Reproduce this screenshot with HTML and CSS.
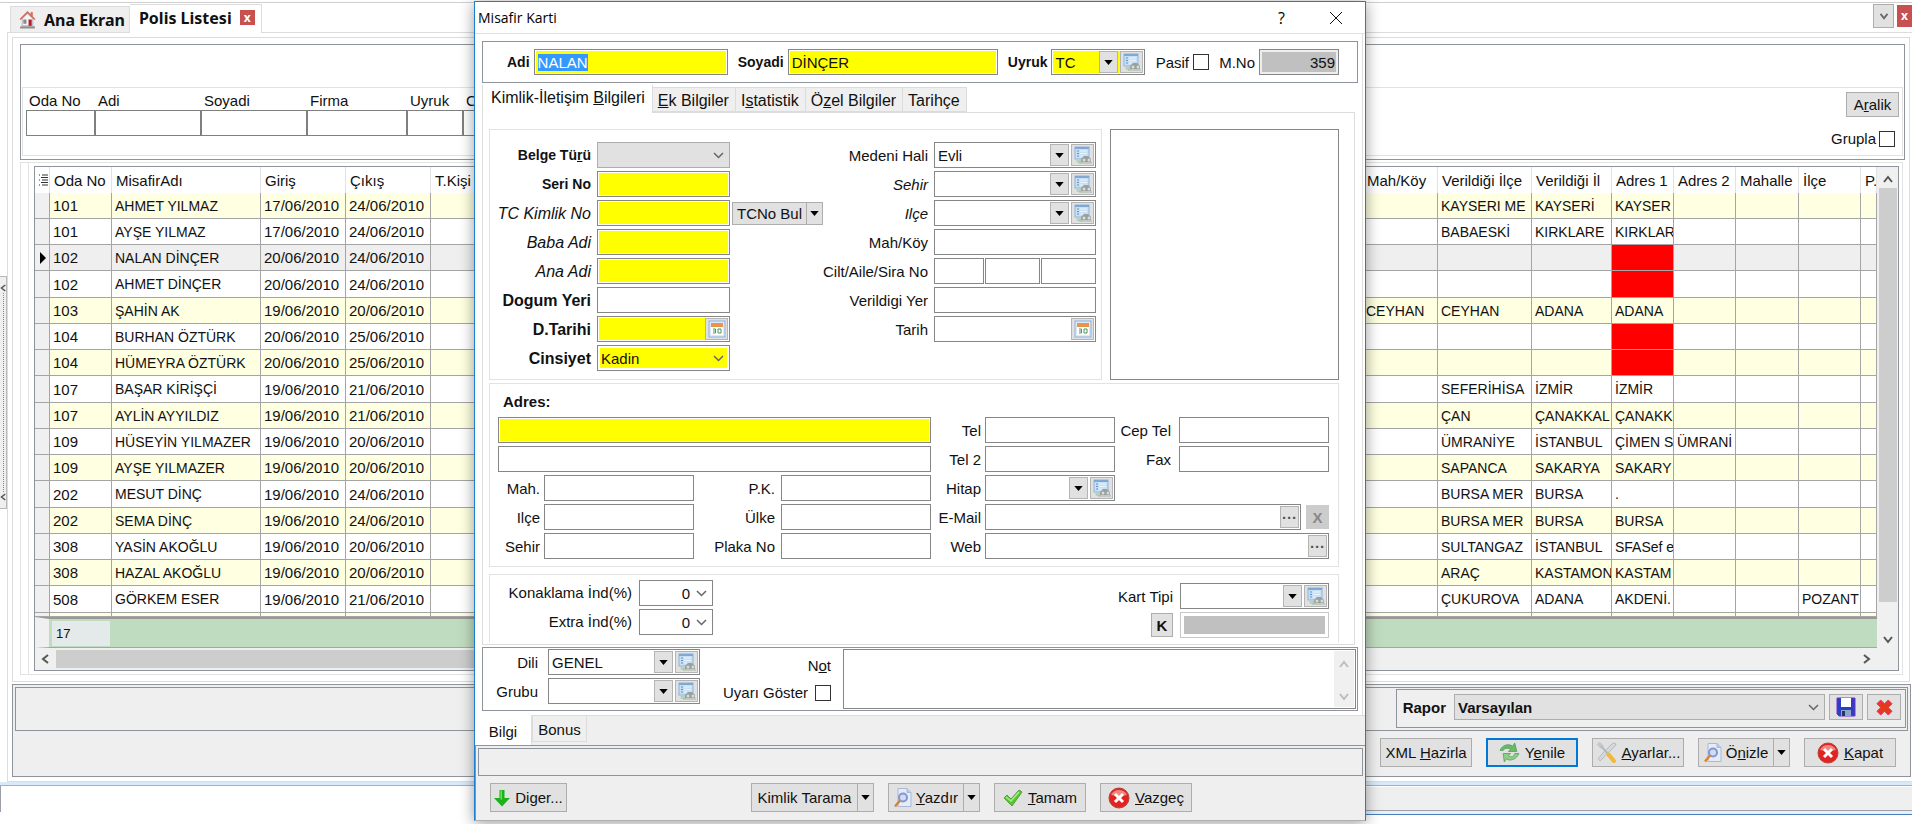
FILE: index.html
```html
<!DOCTYPE html>
<html lang="tr">
<head>
    <meta charset="UTF-8">
    <meta name="viewport" content="width=device-width, initial-scale=1.0">
    <title>Misafir Karti</title>
    <link rel="stylesheet" href="styles.css">
</head>
<body>
    <!-- icon set -->
    <svg class="sprite" aria-hidden="true">
        <symbol id="i-home" viewBox="0 0 16 18">
            <path d="M3 8v7h10V8L8 3z" fill="#f4f4f4" stroke="#b8b8b8"/>
            <path d="M1 9l7-7 7 7" fill="none" stroke="#d9675a" stroke-width="1.500"/>
            <path d="M12 2v4" stroke="#d9675a" stroke-width="2"/>
            <rect x="4" y="9" width="3" height="4" fill="#8a8a8a"/>
            <rect x="9" y="9" width="3" height="6" fill="#b3202c"/>
            <path d="M1 16.500h14" stroke="#8d8d8d" stroke-width="2"/>
        </symbol>
        <symbol id="i-lookup" viewBox="0 0 20 20">
            <rect x="2" y="2" width="14" height="12" fill="#c9dff3" stroke="#8fb5dc"/>
            <path d="M2 3h14" stroke="#7ea9d6" stroke-width="2"/>
            <path d="M4 6h2M4 8.500h2M4 11h2" stroke="#5c90c8"/>
            <path d="M7 6h7M7 8.500h7M7 11h3" stroke="#e8f3fd"/>
            <path d="M3 14l6 1v3H4z" fill="#b9cfc0"/>
            <path d="M8 17v-3l3-3h4l3 3v3z" fill="#9aa09d"/>
            <circle cx="11" cy="15" r="1.500" fill="#d7dbd9"/>
            <circle cx="16" cy="15" r="1.500" fill="#d7dbd9"/>
            <path d="M6 18h13" stroke="#9fb79f"/>
        </symbol>
        <symbol id="i-calendar" viewBox="0 0 18 18">
            <rect x="1" y="1" width="16" height="16" fill="#dce9f8" stroke="#8fb0dc"/>
            <rect x="3" y="3" width="12" height="12" fill="#fff"/>
            <rect x="3" y="3" width="12" height="4" fill="#e8944a"/>
            <path d="M5 9h2.500M5 11h2M5 13h2.500M7.500 9v4M10 9h3v4h-3z" fill="none" stroke="#4a9a5a"/>
        </symbol>
        <symbol id="i-down" viewBox="0 0 16 18">
            <path d="M5.500 1h5v8H16l-8 8.500L0 9h5.500z" fill="#19b219"/>
            <path d="M6.500 1.500h1.500v9H6.500z" fill="#6fe05a"/>
        </symbol>
        <symbol id="i-preview" viewBox="0 0 18 20">
            <path d="M4 1h9l4 4v14H4z" fill="#e4ecfa" stroke="#a9b9d6"/>
            <path d="M13 1v4h4" fill="#b9cbe8" stroke="#a9b9d6"/>
            <circle cx="9" cy="10" r="4" fill="#cfdcf3" stroke="#8496cc" stroke-width="2"/>
            <path d="M6 13l-5 6" stroke="#d98236" stroke-width="2.500"/>
        </symbol>
        <symbol id="i-check" viewBox="0 0 20 18">
            <path d="M1 9l3-3 4 4 8-9 3 2L9 17z" fill="#55c82f" stroke="#5a9a4a"/>
            <path d="M3 8l5 4 8-9" fill="none" stroke="#a6ee85" stroke-width="1.500"/>
        </symbol>
        <symbol id="i-cancel" viewBox="0 0 22 22">
            <circle cx="11" cy="11" r="10" fill="#e2231f" stroke="#b9403e"/>
            <path d="M3 8a9 9 0 0 1 16 0 20 12 0 0 1-16 0z" fill="#f28781"/>
            <path d="M7 7l8 8M15 7l-8 8" stroke="#fff" stroke-width="3"/>
        </symbol>
        <symbol id="i-refresh" viewBox="0 0 20 20">
            <path d="M1 8c2-5 8-7 12-4l2-3 2 8H9l2-2C8 5 5 6 4 8z" fill="#6cb86a" stroke="#4d9a50" stroke-width=".7"/>
            <path d="M19 11c-2 5-8 8-12 5l-2 3-1-8h7l-2 2c3 2 5 1 6-2z" fill="#8ccf86" stroke="#4d9a50" stroke-width=".7"/>
        </symbol>
        <symbol id="i-tools" viewBox="0 0 20 20">
            <path d="M17 1l-2 1-8 8-5 6 2 2 6-6 8-8 1-2z" fill="#d5d8dc" stroke="#a8acb2" stroke-width=".7"/>
            <path d="M2 1l4 4" stroke="#c4c8cd" stroke-width="4"/>
            <path d="M5 4l6 7" stroke="#b5b9bf" stroke-width="2"/>
            <path d="M12 12l5 6" stroke="#f0b93a" stroke-width="4" stroke-linecap="round"/>
        </symbol>
        <symbol id="i-save" viewBox="0 0 20 20">
            <path d="M1 1h18v18H3l-2-2z" fill="#2b3fc4" stroke="#7a2fc0"/>
            <rect x="5" y="1" width="10" height="9" fill="#fff"/>
            <rect x="5" y="13" width="10" height="6" fill="#8aa7c8"/>
            <rect x="6" y="14" width="3" height="5" fill="#26346e"/>
        </symbol>
        <symbol id="i-delete" viewBox="0 0 18 18">
            <path d="M5 1l4 4 4-4 4 4-4 4 4 4-4 4-4-4-4 4-4-4 4-4-4-4z" fill="#e33a1d" stroke="#ee2a6a" stroke-linejoin="round"/>
        </symbol>
        <symbol id="i-rows" viewBox="0 0 9 12">
            <path d="M0 1h1M3 1h6M2 3.500h7M0 6h1M3 6h6M2 8.500h7M0 11h1M3 11h6" stroke="#333"/>
        </symbol>
        <symbol id="i-tri" viewBox="0 0 10 6"><path d="M0 0h10L5 6z" fill="#000"/></symbol>
        <symbol id="i-left" viewBox="0 0 8 10"><path d="M7 1L2 5l5 4" fill="none" stroke="#555" stroke-width="2"/></symbol>
        <symbol id="i-right" viewBox="0 0 8 10"><path d="M1 1l5 4-5 4" fill="none" stroke="#555" stroke-width="2"/></symbol>
        <symbol id="i-up" viewBox="0 0 10 8"><path d="M1 7l4-5 4 5" fill="none" stroke="currentColor" stroke-width="2"/></symbol>
        <symbol id="i-dn" viewBox="0 0 10 8"><path d="M1 1l4 5 4-5" fill="none" stroke="currentColor" stroke-width="2"/></symbol>
        <symbol id="i-x" viewBox="0 0 12 12"><path d="M0 0l12 12M12 0L0 12" stroke="#111"/></symbol>
    </svg>

    <div class="app">
        <div class="workspace">
            <div class="gutter">
                <div class="splitter">
                    <svg width="6" height="10"><use href="#i-left"/></svg>
                    <span class="dots"></span>
                    <svg width="6" height="10"><use href="#i-left"/></svg>
                </div>
            </div>
            <main class="main">
                <div class="main-tabs">
                    <a class="main-tab" href="#"><svg width="17" height="19"><use href="#i-home"/></svg>Ana Ekran</a>
                    <a class="main-tab active" href="#">Polis Listesi<span class="tab-close">x</span></a>
                    <div class="win-buttons">
                        <button class="drop" aria-label="Liste"><svg width="10" height="7"><use href="#i-dn"/></svg></button>
                        <button class="close" aria-label="Kapat">x</button>
                    </div>
                </div>
                <div class="page">
                    <div class="page-inner">
                        <div class="filter">
                            <div class="filter-box">
                                <div class="filter-fields">
                                    <label class="ff w-oda">Oda No<input type="text"></label>
                                    <label class="ff w-adi">Adi<input type="text"></label>
                                    <label class="ff w-adi">Soyadi<input type="text"></label>
                                    <label class="ff w-firma">Firma<input type="text"></label>
                                    <label class="ff w-uyruk">Uyruk<input type="text"></label>
                                    <label class="ff w-uyruk">Cinsiyet<input type="text"></label>
                                </div>
                                <div class="filter-side">
                                    <button class="btn small"><span>A<u>r</u>alik</span></button>
                                    <label class="check">Grupla<input type="checkbox"></label>
                                </div>
                            </div>
                        </div>
                        <div class="grid-panel">
                            <div class="grid-panel-inner">
                                <div class="grid">
                                    <div class="grid-left">
                                        <table class="guests">
                                            <colgroup>
                                                <col class="c-ind"><col class="c-oda"><col class="c-name"><col class="c-date"><col class="c-date"><col class="c-kisi"><col><col class="c-mah"><col class="c-vilce"><col class="c-vil"><col class="c-adr"><col class="c-adr"><col class="c-mhl"><col class="c-adr"><col class="c-pk">
                                            </colgroup>
                                            <thead>
                                                <tr><th><svg width="9" height="12"><use href="#i-rows"/></svg></th><th>Oda No</th><th>MisafirAdı</th><th>Giriş</th><th>Çıkış</th><th>T.Kişi</th><th></th><th>Mah/Köy</th><th>Verildiği İlçe</th><th>Verildiği İl</th><th>Adres 1</th><th>Adres 2</th><th>Mahalle</th><th>İlçe</th><th>P.</th></tr>
                                            </thead>
                                            <tbody>
                                                <tr><td></td><td class="n">101</td><td>AHMET YILMAZ</td><td class="n">17/06/2010</td><td class="n">24/06/2010</td><td></td><td></td><td></td><td>KAYSERI ME</td><td>KAYSERİ</td><td>KAYSER</td><td></td><td></td><td></td><td></td></tr>
                                                <tr><td></td><td class="n">101</td><td>AYŞE YILMAZ</td><td class="n">17/06/2010</td><td class="n">24/06/2010</td><td></td><td></td><td></td><td>BABAESKİ</td><td>KIRKLARE</td><td>KIRKLAR</td><td></td><td></td><td></td><td></td></tr>
                                                <tr class="current"><td><i class="marker"></i></td><td class="n">102</td><td>NALAN DİNÇER</td><td class="n">20/06/2010</td><td class="n">24/06/2010</td><td></td><td></td><td></td><td></td><td></td><td class="missing"></td><td></td><td></td><td></td><td></td></tr>
                                                <tr><td></td><td class="n">102</td><td>AHMET DİNÇER</td><td class="n">20/06/2010</td><td class="n">24/06/2010</td><td></td><td></td><td></td><td></td><td></td><td class="missing"></td><td></td><td></td><td></td><td></td></tr>
                                                <tr><td></td><td class="n">103</td><td>ŞAHİN AK</td><td class="n">19/06/2010</td><td class="n">20/06/2010</td><td></td><td></td><td>CEYHAN</td><td>CEYHAN</td><td>ADANA</td><td>ADANA</td><td></td><td></td><td></td><td></td></tr>
                                                <tr><td></td><td class="n">104</td><td>BURHAN ÖZTÜRK</td><td class="n">20/06/2010</td><td class="n">25/06/2010</td><td></td><td></td><td></td><td></td><td></td><td class="missing"></td><td></td><td></td><td></td><td></td></tr>
                                                <tr><td></td><td class="n">104</td><td>HÜMEYRA ÖZTÜRK</td><td class="n">20/06/2010</td><td class="n">25/06/2010</td><td></td><td></td><td></td><td></td><td></td><td class="missing"></td><td></td><td></td><td></td><td></td></tr>
                                                <tr><td></td><td class="n">107</td><td>BAŞAR KİRİŞÇİ</td><td class="n">19/06/2010</td><td class="n">21/06/2010</td><td></td><td></td><td></td><td>SEFERİHİSA</td><td>İZMİR</td><td>İZMİR</td><td></td><td></td><td></td><td></td></tr>
                                                <tr><td></td><td class="n">107</td><td>AYLİN AYYILDIZ</td><td class="n">19/06/2010</td><td class="n">21/06/2010</td><td></td><td></td><td></td><td>ÇAN</td><td>ÇANAKKAL</td><td>ÇANAKK</td><td></td><td></td><td></td><td></td></tr>
                                                <tr><td></td><td class="n">109</td><td>HÜSEYİN YILMAZER</td><td class="n">19/06/2010</td><td class="n">20/06/2010</td><td></td><td></td><td></td><td>ÜMRANİYE</td><td>İSTANBUL</td><td>ÇİMEN S</td><td>ÜMRANİ</td><td></td><td></td><td></td></tr>
                                                <tr><td></td><td class="n">109</td><td>AYŞE YILMAZER</td><td class="n">19/06/2010</td><td class="n">20/06/2010</td><td></td><td></td><td></td><td>SAPANCA</td><td>SAKARYA</td><td>SAKARY</td><td></td><td></td><td></td><td></td></tr>
                                                <tr><td></td><td class="n">202</td><td>MESUT DİNÇ</td><td class="n">19/06/2010</td><td class="n">24/06/2010</td><td></td><td></td><td></td><td>BURSA MER</td><td>BURSA</td><td>.</td><td></td><td></td><td></td><td></td></tr>
                                                <tr><td></td><td class="n">202</td><td>SEMA DİNÇ</td><td class="n">19/06/2010</td><td class="n">24/06/2010</td><td></td><td></td><td></td><td>BURSA MER</td><td>BURSA</td><td>BURSA</td><td></td><td></td><td></td><td></td></tr>
                                                <tr><td></td><td class="n">308</td><td>YASİN AKOĞLU</td><td class="n">19/06/2010</td><td class="n">20/06/2010</td><td></td><td></td><td></td><td>SULTANGAZ</td><td>İSTANBUL</td><td>SFASef e</td><td></td><td></td><td></td><td></td></tr>
                                                <tr><td></td><td class="n">308</td><td>HAZAL AKOĞLU</td><td class="n">19/06/2010</td><td class="n">20/06/2010</td><td></td><td></td><td></td><td>ARAÇ</td><td>KASTAMON</td><td>KASTAM</td><td></td><td></td><td></td><td></td></tr>
                                                <tr><td></td><td class="n">508</td><td>GÖRKEM ESER</td><td class="n">19/06/2010</td><td class="n">21/06/2010</td><td></td><td></td><td></td><td>ÇUKUROVA</td><td>ADANA</td><td>AKDENİ.</td><td></td><td></td><td>POZANT</td><td></td></tr>
                                                <tr class="cut"><td></td><td></td><td></td><td></td><td></td><td></td><td></td><td></td><td></td><td></td><td></td><td></td><td></td><td></td><td></td></tr>
                                            </tbody>
                                        </table>
                                        <div class="totals"><span class="count">17</span></div>
                                        <div class="hscroll">
                                            <svg width="8" height="10"><use href="#i-left"/></svg>
                                            <span class="hthumb"></span>
                                            <svg width="8" height="10"><use href="#i-right"/></svg>
                                        </div>
                                    </div>
                                    <div class="vscroll">
                                        <svg width="10" height="8"><use href="#i-up"/></svg>
                                        <span class="vthumb"></span>
                                        <svg width="10" height="8"><use href="#i-dn"/></svg>
                                    </div>
                                </div>
                            </div>
                        </div>
                    </div>
                    <div class="actions">
                        <div class="report-row">
                            <div class="report">
                                <label for="rapor">Rapor</label>
                                <select id="rapor" class="select grey"><option>Varsayılan</option></select>
                                <button class="btn icon" aria-label="Kaydet"><svg width="20" height="20"><use href="#i-save"/></svg></button>
                                <button class="btn icon" aria-label="Sil"><svg width="17" height="17"><use href="#i-delete"/></svg></button>
                            </div>
                        </div>
                        <div class="action-buttons">
                            <button class="btn wide"><span>XML <u>H</u>azirla</span></button>
                            <button class="btn wide primary"><svg width="21" height="21"><use href="#i-refresh"/></svg><span>Y<u>e</u>nile</span></button>
                            <button class="btn wide"><svg width="21" height="21"><use href="#i-tools"/></svg><span><u>A</u>yarlar...</span></button>
                            <div class="split wide"><button class="btn"><svg width="18" height="21"><use href="#i-preview"/></svg><span>Ö<u>n</u>izle</span></button><button class="btn arrow" aria-label="Önizle seçenekleri"><svg width="9" height="5"><use href="#i-tri"/></svg></button></div>
                            <button class="btn wide"><svg width="22" height="22"><use href="#i-cancel"/></svg><span><u>K</u>apat</span></button>
                        </div>
                    </div>
                </div>
            </main>
        </div>
        <div class="window-edge"></div>
        <div class="status"><span class="status-left"></span><span class="status-right"></span></div>
    </div>

    <section class="dialog" role="dialog" aria-label="Misafir Karti">
        <header class="title-bar">
            <span class="title">Misafir Karti</span>
            <button class="help" aria-label="Yardım">?</button>
            <button class="quit" aria-label="Kapat"><svg width="12" height="12"><use href="#i-x"/></svg></button>
        </header>
        <div class="dialog-body">
            <div class="head-panel">
                <div class="pair"><label class="b" for="adi">Adi</label><input class="field req w-fn" id="adi" type="text" value="NALAN"></div>
                <div class="pair"><label class="b" for="soyadi">Soyadi</label><input class="field req w-ln" id="soyadi" type="text" value="DİNÇER"></div>
                <div class="pair"><label class="b" for="uyruk">Uyruk</label>
                    <div class="combo req w-uy"><input id="uyruk" type="text" value="TC"><button class="mini" aria-label="Aç"><svg width="9" height="5"><use href="#i-tri"/></svg></button><button class="look" aria-label="Ara"><svg width="20" height="20"><use href="#i-lookup"/></svg></button></div>
                </div>
                <label class="check">Pasif<input type="checkbox"></label>
                <div class="pair"><label for="mno">M.No</label><input class="field ro w-mno" id="mno" type="text" value="359" readonly></div>
            </div>

            <nav class="tabs">
                <a class="tab active" href="#">Kimlik-İletişim <u>B</u>ilgileri</a>
                <a class="tab" href="#"><u>E</u>k Bilgiler</a>
                <a class="tab" href="#">I<u>s</u>tatistik</a>
                <a class="tab" href="#">Ö<u>z</u>el Bilgiler</a>
                <a class="tab" href="#">Tarihçe</a>
            </nav>
            <div class="sheet">
                <div class="top-row">
                    <div class="group identity">
                        <div class="form-left">
                            <label class="b" for="belge">Belge Tü<u>r</u>ü</label><div><select class="select grey" id="belge"><option></option></select></div>
                            <label class="b" for="seri">Seri No</label><div><input class="field req" id="seri" type="text"></div>
                            <label class="it big" for="tc">TC Kimlik No</label>
                            <div class="with-button"><input class="field req" id="tc" type="text"><div class="split find"><button class="btn">TCNo Bul</button><button class="btn arrow" aria-label="TCNo seçenekleri"><svg width="9" height="5"><use href="#i-tri"/></svg></button></div></div>
                            <label class="it big" for="baba">Baba Adi</label><div><input class="field req" id="baba" type="text"></div>
                            <label class="it big" for="ana">Ana Adi</label><div><input class="field req" id="ana" type="text"></div>
                            <label class="b big" for="dyeri">Dogum Yeri</label><div><input class="field" id="dyeri" type="text"></div>
                            <label class="b big" for="dtarih">D.Tarihi</label><div class="combo req"><input id="dtarih" type="text"><button class="look" aria-label="Takvim"><svg width="18" height="18"><use href="#i-calendar"/></svg></button></div>
                            <label class="b big" for="cins">Cinsiyet</label><div><select class="select yellow" id="cins"><option>Kadin</option></select></div>
                        </div>
                        <div class="form-right">
                            <label for="medeni">Medeni Hali</label>
                            <div class="combo"><input id="medeni" type="text" value="Evli"><button class="mini" aria-label="Aç"><svg width="9" height="5"><use href="#i-tri"/></svg></button><button class="look" aria-label="Ara"><svg width="20" height="20"><use href="#i-lookup"/></svg></button></div>
                            <label class="it" for="sehir1">Sehir</label>
                            <div class="combo"><input id="sehir1" type="text"><button class="mini" aria-label="Aç"><svg width="9" height="5"><use href="#i-tri"/></svg></button><button class="look" aria-label="Ara"><svg width="20" height="20"><use href="#i-lookup"/></svg></button></div>
                            <label class="it" for="ilce1">Ilçe</label>
                            <div class="combo"><input id="ilce1" type="text"><button class="mini" aria-label="Aç"><svg width="9" height="5"><use href="#i-tri"/></svg></button><button class="look" aria-label="Ara"><svg width="20" height="20"><use href="#i-lookup"/></svg></button></div>
                            <label for="mahkoy">Mah/Köy</label><input class="field" id="mahkoy" type="text">
                            <label for="cilt">Cilt/Aile/Sira No</label>
                            <div class="trio"><input class="field" id="cilt" type="text"><input class="field" type="text" aria-label="Aile"><input class="field" type="text" aria-label="Sira No"></div>
                            <label for="vyer">Verildigi Yer</label><input class="field" id="vyer" type="text">
                            <label for="tarih">Tarih</label>
                            <div class="combo"><input id="tarih" type="text"><button class="look" aria-label="Takvim"><svg width="18" height="18"><use href="#i-calendar"/></svg></button></div>
                        </div>
                    </div>
                    <div class="photo"></div>
                </div>

                <div class="group address">
                    <label class="b adres-label" for="adr1">Adres:</label>
                    <input class="field req line" id="adr1" type="text">
                    <label for="tel">Tel</label><input class="field" id="tel" type="text">
                    <label class="far" for="cep">Cep Tel</label><input class="field" id="cep" type="text">
                    <input class="field line" type="text" aria-label="Adres 2">
                    <label for="tel2">Tel 2</label><input class="field" id="tel2" type="text">
                    <label class="far" for="fax">Fax</label><input class="field" id="fax" type="text">
                    <label for="mah">Mah.</label><input class="field" id="mah" type="text">
                    <label class="mid" for="pk">P.K.</label><input class="field" id="pk" type="text">
                    <label for="hitap">Hitap</label>
                    <div class="combo hitap"><input id="hitap" type="text"><button class="mini" aria-label="Aç"><svg width="9" height="5"><use href="#i-tri"/></svg></button><button class="look" aria-label="Ara"><svg width="20" height="20"><use href="#i-lookup"/></svg></button></div>
                    <label class="first" for="ilce2">Ilçe</label><input class="field" id="ilce2" type="text">
                    <label class="mid" for="ulke">Ülke</label><input class="field" id="ulke" type="text">
                    <label for="email">E-Mail</label>
                    <div class="mail"><div class="combo"><input id="email" type="text"><button class="mini more" aria-label="E-Mail gönder">···</button></div><button class="btn clear" disabled>X</button></div>
                    <label class="first" for="sehir2">Sehir</label><input class="field" id="sehir2" type="text">
                    <label class="mid" for="plaka">Plaka No</label><input class="field" id="plaka" type="text">
                    <label for="web">Web</label>
                    <div class="combo web"><input id="web" type="text"><button class="mini more" aria-label="Web aç">···</button></div>
                </div>

                <div class="group discount">
                    <div class="disc-left">
                        <label for="konak">Konaklama İnd(%)</label><select class="select num" id="konak"><option>0</option></select>
                        <label for="extra">Extra İnd(%)</label><select class="select num" id="extra"><option>0</option></select>
                    </div>
                    <div class="disc-right">
                        <label for="kart">Kart Tipi</label>
                        <div class="combo"><input id="kart" type="text"><button class="mini" aria-label="Aç"><svg width="9" height="5"><use href="#i-tri"/></svg></button><button class="look" aria-label="Ara"><svg width="20" height="20"><use href="#i-lookup"/></svg></button></div>
                        <button class="btn key">K</button>
                        <input class="field off" type="text" aria-label="Kart No" disabled>
                    </div>
                </div>
            </div>

            <div class="note-panel">
                <div class="lang">
                    <label for="dili">Dili</label>
                    <div class="combo"><input id="dili" type="text" value="GENEL"><button class="mini" aria-label="Aç"><svg width="9" height="5"><use href="#i-tri"/></svg></button><button class="look" aria-label="Ara"><svg width="20" height="20"><use href="#i-lookup"/></svg></button></div>
                    <label for="grubu">Grubu</label>
                    <div class="combo"><input id="grubu" type="text"><button class="mini" aria-label="Aç"><svg width="9" height="5"><use href="#i-tri"/></svg></button><button class="look" aria-label="Ara"><svg width="20" height="20"><use href="#i-lookup"/></svg></button></div>
                </div>
                <div class="note-labels">
                    <label for="not">N<u>o</u>t</label>
                    <label class="check">Uyarı Göster<input type="checkbox"></label>
                </div>
                <div class="note"><textarea id="not"></textarea><span class="note-scroll"><svg width="10" height="8"><use href="#i-up"/></svg><svg width="10" height="8"><use href="#i-dn"/></svg></span></div>
            </div>
        </div>
        <nav class="bottom-tabs">
            <a class="btab active" href="#">Bilgi</a>
            <a class="btab" href="#">Bonus</a>
        </nav>
        <footer class="dialog-footer">
            <div class="message"></div>
            <div class="dialog-buttons">
                <button class="btn diger"><svg width="16" height="18"><use href="#i-down"/></svg><span>Di<u>g</u>er...</span></button>
                <div class="split scan"><button class="btn">Kimlik Tarama</button><button class="btn arrow" aria-label="Tarama seçenekleri"><svg width="9" height="5"><use href="#i-tri"/></svg></button></div>
                <div class="split wide"><button class="btn"><svg width="18" height="21"><use href="#i-preview"/></svg><span><u>Y</u>azdır</span></button><button class="btn arrow" aria-label="Yazdır seçenekleri"><svg width="9" height="5"><use href="#i-tri"/></svg></button></div>
                <button class="btn wide"><svg width="20" height="18"><use href="#i-check"/></svg><span><u>T</u>amam</span></button>
                <button class="btn wide"><svg width="22" height="22"><use href="#i-cancel"/></svg><span><u>V</u>azgeç</span></button>
            </div>
        </footer>
    </section>

    <script>
        const firstName = document.getElementById('adi');
        firstName.focus();
        firstName.select();
    </script>
</body>
</html>
```
FILE: styles.css
```css
* {
    box-sizing: border-box;
}

body {
    margin: 0;
    position: relative;
    min-height: 100vh;
    overflow: hidden;
    background: #fff;
    color: #111;
    font-family: "Liberation Sans", Arial, sans-serif;
    font-size: 15px;
}

input, select, button, textarea {
    font: inherit;
    color: inherit;
    margin: 0;
    padding: 0;
    border-radius: 0;
    outline: none;
}

a {
    color: inherit;
    text-decoration: none;
}

svg {
    display: block;
    flex: none;
}

.sprite {
    position: absolute;
    width: 0;
    height: 0;
}

::selection {
    background: #3399ff;
    color: #fff;
}

/* buttons and fields */

.btn {
    display: flex;
    align-items: center;
    justify-content: center;
    gap: 5px;
    height: 29px;
    border: 1px solid #adadad;
    background: #e1e1e1;
    white-space: nowrap;
}

.btn.wide,
.split.wide {
    width: 92px;
}

.btn.small {
    width: 53px;
    height: 25px;
}

.btn.icon {
    width: 34px;
    height: 26px;
}

.btn.primary {
    border: 2px solid #0078d7;
}

.split {
    display: flex;
}

.split .btn {
    flex: 1;
    gap: 4px;
}

.split .arrow {
    flex: none;
    width: 17px;
    margin-left: -1px;
}

.field,
.combo,
.select {
    width: 133px;
    height: 26px;
    border: 1px solid #868686;
    background: #fff;
}

.field {
    padding: 0 3px;
}

.field.req,
.combo.req {
    background: #ff0;
    box-shadow: inset 0 0 0 1px #fff;
}

.field.ro {
    background: #c0c0c0;
    box-shadow: inset 0 0 0 2px #eee;
    text-align: right;
}

.field.off {
    background: #c0c0c0;
    border-color: #c8c8c8;
    box-shadow: inset 0 0 0 3px #fff;
}

.combo {
    display: flex;
    align-items: center;
    gap: 2px;
    padding: 1px;
}

.combo input {
    flex: 1;
    min-width: 0;
    height: 20px;
    padding: 0 2px;
    border: 0;
    background: transparent;
}

.mini,
.look {
    display: flex;
    align-items: center;
    justify-content: center;
    width: 19px;
    height: 22px;
    border: 1px solid #b4b4b4;
    background: #e1e1e1;
}

.look {
    width: 23px;
}

.more {
    font-weight: bold;
    color: #555;
}

.select {
    appearance: none;
    padding: 0 22px 0 3px;
    background: #fff url("data:image/svg+xml,%3Csvg xmlns='http://www.w3.org/2000/svg' width='11' height='7'%3E%3Cpath d='M1 1l4.500 4.500L10 1' fill='none' stroke='%23666' stroke-width='1.500'/%3E%3C/svg%3E") no-repeat right 5px center;
}

.select.grey {
    background-color: #e1e1e1;
    border-color: #adadad;
}

.select.yellow {
    background-color: #ff0;
    box-shadow: inset 0 0 0 2px #fff;
}

.select.num {
    width: 74px;
    text-align: right;
    text-align-last: right;
}

.check {
    display: flex;
    align-items: center;
    gap: 4px;
}

.check input {
    appearance: none;
    width: 16px;
    height: 16px;
    border: 1px solid #333;
    background: #fff;
}

.b {
    font-weight: bold;
    font-size: 14px;
}

.it {
    font-style: italic;
}

.big {
    font-size: 16px;
}

/* main window */

.app {
    padding-top: 2px;
}

.workspace {
    display: flex;
    border-top: 1px solid #cfcfcf;
}

.gutter {
    display: flex;
    align-items: center;
    width: 7px;
}

.splitter {
    display: flex;
    flex-direction: column;
    align-items: center;
    width: 7px;
    height: 233px;
    padding: 6px 0;
    border: 1px solid #b8b8b8;
    border-left: 0;
    background: #efefef;
}

.dots {
    flex: 1;
    border-left: 1px dotted #3399ff;
}

.main {
    flex: 1;
    min-width: 0;
}

.main-tabs {
    display: flex;
    align-items: flex-end;
    height: 29px;
    padding: 1px 0 0 3px;
    font-family: "Noto Sans", sans-serif;
    font-weight: bold;
    font-size: 16px;
}

.main-tab {
    display: flex;
    align-items: center;
    gap: 8px;
    height: 26px;
    padding: 0 4px 0 8px;
    border: 1px solid #dcdcdc;
    border-bottom: 0;
    background: #efefef;
}

.main-tab.active {
    position: relative;
    height: 29px;
    margin-bottom: -1px;
    padding: 0 6px 3px 9px;
    border-left: 0;
    background: #fff;
}

.tab-close,
.win-buttons .close {
    display: flex;
    justify-content: center;
    align-items: center;
    width: 15px;
    height: 15px;
    background: #c75050;
    color: #fff;
    font-size: 12px;
    line-height: 12px;
}

.win-buttons {
    display: flex;
    align-items: center;
    gap: 3px;
    margin-left: auto;
    margin-bottom: 4px;
}

.win-buttons .drop {
    display: flex;
    align-items: center;
    justify-content: center;
    width: 21px;
    height: 24px;
    border: 1px solid #adadad;
    background: #e1e1e1;
    color: #666;
}

.win-buttons .close {
    width: 15px;
    height: 22px;
    border: 0;
}

.page {
    padding: 4px 0 4px 4px;
    border: 1px solid #dcdcdc;
    border-right: 0;
}

.page-inner {
    margin-right: 2px;
    padding: 6px 4px 6px 7px;
    border: 1px solid #dcdcdc;
}

.filter {
    padding: 42px 1px 3px;
    border: 1px solid #8f949c;
}

.filter-box {
    display: flex;
    justify-content: space-between;
    height: 69px;
    padding: 4px 3px;
    border: 1px solid #e2e2e2;
}

.filter-fields {
    display: flex;
}

.ff {
    display: flex;
    flex-direction: column;
    gap: 1px;
    text-indent: 3px;
}

.ff input {
    width: 100%;
    height: 26px;
    border: 1px solid #7f7f7f;
}

.w-oda {
    width: 69px;
}

.w-adi {
    width: 106px;
}

.w-firma {
    width: 100px;
}

.w-uyruk {
    width: 56px;
}

.filter-side {
    display: flex;
    flex-direction: column;
    align-items: flex-end;
    gap: 13px;
}

.filter-side .check {
    gap: 3px;
    margin-right: 4px;
}

.grid-panel {
    margin: 2px 2px 0 0;
    padding-left: 7px;
    border: 1px solid #e2e2e2;
}

.grid-panel-inner {
    padding: 3px 3px 3px 5px;
    border-left: 1px solid #e2e2e2;
}

.grid {
    display: flex;
    border: 1px solid #8f949c;
}

.grid-left {
    flex: 1;
    min-width: 0;
}

.guests {
    width: 100%;
    table-layout: fixed;
    border-spacing: 0;
    font-size: 14px;
}

.c-ind { width: 15px; }
.c-oda { width: 62px; }
.c-name { width: 149px; }
.c-date { width: 85px; }
.c-kisi { width: 50px; }
.c-mah { width: 75px; }
.c-vilce { width: 94px; }
.c-vil { width: 80px; }
.c-adr { width: 62px; }
.c-mhl { width: 63px; }
.c-pk { width: 16px; }

.guests th,
.guests td {
    height: 26px;
    padding: 0 0 0 3px;
    border-right: 1px solid #a5a5a5;
    text-align: left;
    font-weight: normal;
    white-space: nowrap;
    overflow: hidden;
}

.guests th {
    padding-left: 4px;
    border-color: #e2e2e2;
    font-size: 15px;
}

.guests td {
    border-bottom: 1px solid #a5a5a5;
}

.guests .n {
    font-size: 15px;
}

.guests tbody tr:nth-child(odd) {
    background: #ffffe1;
}

.guests tbody tr:nth-child(4n) td {
    height: 27px;
}

.guests tbody tr.current:nth-child(n) {
    background: #efefef;
}

.guests td:first-child {
    background: #f0f0f0;
}

.guests .missing {
    background: #f00;
}

.guests .cut td {
    height: 4px;
}

.marker {
    display: block;
    margin-left: 2px;
    border: 6px solid transparent;
    border-left-color: #000;
    border-right-width: 0;
}

.totals {
    height: 31px;
    padding: 2px 0 2px 18px;
    border-top: 2px solid #999;
    border-bottom: 1px solid #a5a5a5;
    border-left: 14px solid #f0f0f0;
    background: #c0dcc0;
}

.count {
    display: block;
    width: 58px;
    height: 25px;
    margin-left: -15px;
    padding-left: 4px;
    background: #e4e9e9;
    font-size: 13px;
    line-height: 25px;
}

.hscroll {
    display: flex;
    align-items: center;
    height: 22px;
    padding: 2px 6px;
    background: #f0f0f0;
}

.hthumb {
    width: 60%;
    height: 18px;
    margin: 0 auto 0 7px;
    background: #cdcdcd;
}

.vscroll {
    display: flex;
    flex-direction: column;
    align-items: center;
    width: 21px;
    padding: 8px 1px 26px;
    background: #f0f0f0;
    color: #555;
}

.vthumb {
    width: 18px;
    flex: 1;
    margin: 5px 0 34px;
    background: #cdcdcd;
}

.actions {
    margin: 2px 1px 0 0;
    padding: 2px;
    height: 93px;
    border: 1px solid #8f949c;
    background: #efefef;
}

.report-row {
    display: flex;
    justify-content: flex-end;
    height: 44px;
    padding: 1px 1px 2px;
    border: 1px solid #8f949c;
}

.report {
    display: flex;
    align-items: center;
    gap: 4px;
    padding: 0 4px 3px 6px;
    border: 1px solid #8f949c;
    font-weight: bold;
}

.report .select {
    width: 371px;
    margin-left: 4px;
}

.action-buttons {
    display: flex;
    justify-content: flex-end;
    gap: 14px;
    padding: 7px 12px 0 0;
}

.window-edge {
    height: 4px;
    border-bottom: 1px solid #a7afba;
    background: #d8eafa;
}

.status {
    display: flex;
    height: 26px;
}

.status-left {
    width: 474px;
    border-left: 1px solid #9a9fa8;
}

.status-right {
    flex: 1;
    height: 29px;
    border-top: 1px solid #fff;
    border-bottom: 1px solid #4a7ebb;
    background: linear-gradient(#efefef 23px, #9a9fa8 23px, #9a9fa8 24px, #e6f0fa 24px);
}

/* guest card */

.dialog {
    position: absolute;
    left: 474px;
    top: 1px;
    width: 892px;
    border: 1px solid #1a7fd0;
    border-bottom-color: #b0b0b0;
    background: #fff;
    box-shadow: 0 2px 14px rgba(0, 0, 0, 0.4);
}

.title-bar {
    display: flex;
    align-items: center;
    height: 32px;
    padding: 0 23px 0 3px;
    border-bottom: 1px solid #e0e0e0;
    font-family: "Open Sans", sans-serif;
    font-size: 14px;
    color: #000;
}

.title {
    margin-right: auto;
}

.help,
.quit {
    border: 0;
    background: none;
    font-size: 16px;
}

.quit {
    margin-left: 45px;
}

.dialog-body {
    margin-right: 2px;
    padding: 7px 4px 4px 7px;
    border-right: 1px solid #e0e0e0;
}

.dialog-body label {
    white-space: nowrap;
}

.head-panel {
    display: flex;
    align-items: center;
    justify-content: space-between;
    height: 42px;
    padding: 0 18px 0 24px;
    border: 1px solid #8f949c;
}

.pair {
    display: flex;
    align-items: center;
    gap: 4px;
}

.w-fn { width: 194px; }
.w-ln { width: 210px; }
.w-uy { width: 94px; }
.w-mno { width: 80px; }

.tabs {
    display: flex;
    align-items: flex-end;
    height: 29px;
    font-size: 16px;
}

.tab {
    height: 25px;
    padding: 0 6px 0 5px;
    border: 1px solid #dcdcdc;
    border-left: 0;
    background: #efefef;
    line-height: 25px;
}

.tab.active {
    position: relative;
    height: 29px;
    margin-bottom: -1px;
    padding: 0 7px 0 8px;
    border-top-color: #fff;
    border-left: 1px solid #dcdcdc;
    border-bottom: 0;
    background: #fff;
    line-height: 25px;
}

.sheet {
    margin-right: 3px;
    padding: 16px 15px 2px 6px;
    border: 1px solid #dcdcdc;
}

.top-row {
    display: flex;
    gap: 8px;
}

.group {
    border: 1px solid #e2e2e2;
}

.identity {
    display: flex;
    justify-content: space-between;
    flex: 1;
    padding: 12px 5px 4px 0;
}

.form-left,
.form-right {
    display: grid;
    grid-auto-rows: 26px;
    gap: 3px 6px;
}

.form-left {
    grid-template-columns: 101px 133px;
}

.form-right {
    grid-template-columns: auto 162px;
}

.form-right .combo,
.form-right > .field {
    width: 162px;
}

.form-left label,
.form-right label,
.address label,
.disc-left label,
.disc-right label,
.lang label {
    padding-top: 5px;
    text-align: right;
}

.with-button {
    display: flex;
    align-items: center;
    gap: 2px;
    width: 226px;
}

.find {
    width: 92px;
}

.find .btn {
    height: 23px;
}

.trio {
    display: grid;
    grid-template-columns: 50px 55px 55px;
    gap: 1px;
}

.trio .field {
    width: 100%;
}

.photo {
    width: 229px;
    height: 251px;
    border: 1px solid #868686;
}

.address {
    display: grid;
    grid-template-columns: 46px 150px 87px 150px 54px 130px 64px 1fr;
    grid-auto-rows: 26px;
    row-gap: 3px;
    margin-top: 3px;
    padding: 4px 9px 7px 8px;
}

.address .field,
.address .combo {
    width: 100%;
}

.address label {
    padding-right: 4px;
}

.address .mid {
    padding-right: 6px;
}

.address .far {
    padding-right: 8px;
}

.address .adres-label {
    grid-column: 1 / -1;
    padding-left: 5px;
    font-size: 15px;
    text-align: left;
}

.address .line {
    grid-column: 1 / 5;
}

.address .first {
    grid-column: 1;
}

.mail {
    display: flex;
    align-items: center;
    gap: 5px;
    grid-column: 6 / 9;
}

.mail .clear {
    flex: none;
    width: 23px;
    height: 24px;
    border-color: #ccc;
    background: #ccc;
    color: #888;
    font-weight: bold;
}

.address .web {
    grid-column: 6 / 9;
}

.discount {
    display: flex;
    justify-content: space-between;
    height: 68px;
    margin-top: 7px;
    padding: 5px 9px 0 14px;
    border-bottom: 0;
}

.disc-left,
.disc-right {
    display: grid;
    grid-template-columns: 128px 74px;
    grid-auto-rows: 26px;
    gap: 3px 7px;
}

.disc-left label {
    padding-top: 4px;
}

.disc-right {
    grid-template-columns: 58px 149px;
    padding-top: 3px;
}

.disc-right .combo,
.disc-right .field {
    width: 149px;
}

.key {
    justify-self: end;
    align-self: center;
    width: 22px;
    height: 24px;
    font-weight: bold;
}

.note-panel {
    display: flex;
    height: 64px;
    margin-top: 2px;
    padding: 1px;
    border: 1px solid #8f949c;
}

.lang {
    display: grid;
    grid-template-columns: 54px 152px;
    grid-auto-rows: 26px;
    gap: 3px 10px;
}

.lang .combo {
    width: 152px;
}

.note-labels {
    display: flex;
    flex-direction: column;
    align-items: flex-end;
    justify-content: space-between;
    width: 131px;
    padding: 8px 0;
}

.note-labels .check {
    gap: 7px;
}

.note {
    display: flex;
    flex: 1;
    margin-left: 12px;
    padding: 1px;
    border: 1px solid #868686;
}

.note textarea {
    flex: 1;
    border: 0;
    resize: none;
    overflow: hidden;
}

.note-scroll {
    display: flex;
    flex-direction: column;
    justify-content: space-between;
    align-items: center;
    width: 20px;
    padding: 9px 0 6px;
    background: #f0f0f0;
    color: #bbb;
}

.bottom-tabs {
    display: flex;
    height: 30px;
    border-top: 1px solid #dcdcdc;
    background: #efefef;
}

.btab {
    width: 55px;
    height: 26px;
    border: 1px solid #dcdcdc;
    border-top: 0;
    line-height: 28px;
    text-align: center;
}

.btab.active {
    position: relative;
    width: 57px;
    height: 30px;
    margin-top: -1px;
    border-width: 0 1px 0 0;
    background: #fff;
    line-height: 34px;
}

.dialog-footer {
    padding: 2px 2px 8px;
    border-top: 1px solid #8f949c;
    border-left: 1px solid #8f949c;
    background: #efefef;
}

.message {
    height: 28px;
    border: 1px solid #8f949c;
}

.dialog-buttons {
    display: flex;
    gap: 14px;
    padding: 7px 12px 0;
}

.diger {
    width: 77px;
    margin-right: 170px;
}

.scan {
    width: 123px;
}
```
